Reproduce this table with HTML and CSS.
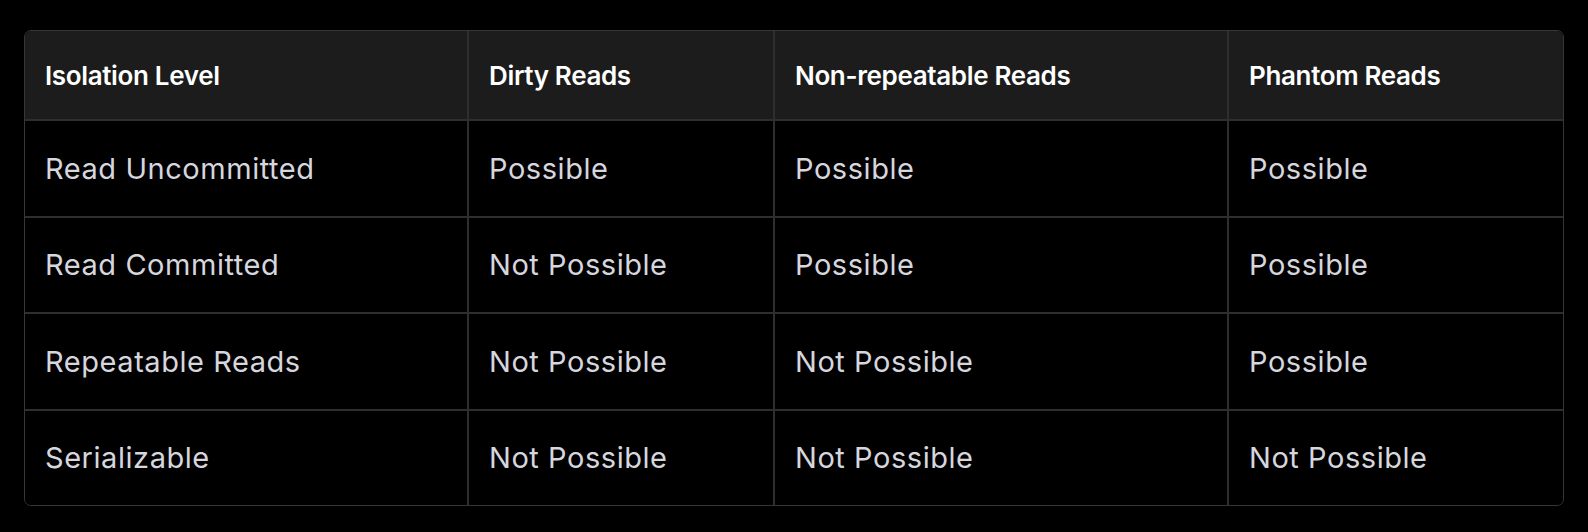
FILE: index.html
```html
<!DOCTYPE html>
<html lang="en">
<head>
<meta charset="utf-8">
<title>Isolation Levels</title>
<link rel="stylesheet" href="styles.css">
</head>
<body>
<div class="wrap">
  <table class="iso">
    <colgroup>
      <col class="c1">
      <col class="c2">
      <col class="c3">
      <col class="c4">
    </colgroup>
    <thead>
      <tr>
        <th>Isolation Level</th>
        <th>Dirty Reads</th>
        <th>Non-repeatable Reads</th>
        <th>Phantom Reads</th>
      </tr>
    </thead>
    <tbody>
      <tr>
        <td>Read Uncommitted</td>
        <td>Possible</td>
        <td>Possible</td>
        <td>Possible</td>
      </tr>
      <tr>
        <td>Read Committed</td>
        <td>Not Possible</td>
        <td>Possible</td>
        <td>Possible</td>
      </tr>
      <tr>
        <td>Repeatable Reads</td>
        <td>Not Possible</td>
        <td>Not Possible</td>
        <td>Possible</td>
      </tr>
      <tr>
        <td>Serializable</td>
        <td>Not Possible</td>
        <td>Not Possible</td>
        <td>Not Possible</td>
      </tr>
    </tbody>
  </table>
</div>
</body>
</html>
```
FILE: styles.css
```css
html, body {
  margin: 0;
  padding: 0;
  background: #000;
}
body {
  font-family: Inter, "Liberation Sans", Arial, sans-serif;
  width: 1588px;
  height: 532px;
  overflow: hidden;
}
.wrap {
  padding: 30px 24px 26px 24px;
}
.iso {
  width: 1540px;
  table-layout: fixed;
  border-collapse: separate;
  border-spacing: 0;
  border: 1px solid #363636;
  border-radius: 7px;
  overflow: hidden;
}
.c1 { width: 442px; }
.c2 { width: 306px; }
.c3 { width: 454px; }
.c4 { width: 336px; }
.iso th,
.iso td {
  text-align: left;
  padding: 0 19px 0 20px;
  border-left: 2px solid #2e2e2e;
  border-top: 2px solid #2e2e2e;
  white-space: nowrap;
}
.iso th:first-child,
.iso td:first-child {
  border-left: none;
}
.iso thead th {
  border-top: none;
  background: #1c1c1c;
  color: #ffffff;
  font-weight: 600;
  font-size: 26px;
  letter-spacing: -0.35px;
  height: 88px;
}
.iso tbody td {
  background: #000;
  color: #d6d6de;
  font-weight: 400;
  font-size: 29px;
  letter-spacing: 0.55px;
  height: 94.5px;
}
```
